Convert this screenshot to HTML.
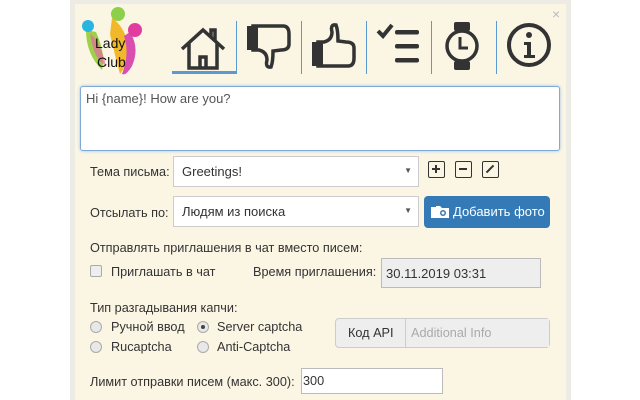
<!DOCTYPE html>
<html><head><meta charset="utf-8"><style>
*{box-sizing:border-box;margin:0;padding:0}
body{width:640px;height:400px;background:#fff;font-family:"Liberation Sans",sans-serif;font-size:12.7px;color:#333;position:relative;overflow:hidden}
.panel{position:absolute;left:70px;top:0;width:501px;height:400px;background:#ecebe4}
.inner{position:absolute;left:75px;top:4px;width:491px;height:396px;background:#fbf6e4}
.a{position:absolute}
.sep{position:absolute;top:21px;width:1px;height:53px;background:#5a9ad0}
.sel{position:absolute;background:#fff;border:1px solid #ccc;padding:7px 8px;font-size:13px}
.sel:after{content:"▼";position:absolute;right:6px;top:9px;font-size:8px;color:#555}
.sq{position:absolute;top:161px;width:17px;height:17px;border:1.5px solid #333;border-radius:2px}
.rad{position:absolute;width:12px;height:12px;border-radius:50%;border:1px solid #aaa;background:#e8e8e8}
</style></head><body>
<div class="panel"></div><div class="inner"></div>
<div class="a" style="left:552px;top:6px;color:#bbb;font-size:14px">×</div>
<svg class="a" style="left:80px;top:4px" width="75" height="72" viewBox="0 0 75 72">
<path d="M6 26 Q6 50 22 66 Q26 50 16 28Z" fill="#9ed04a"/><path d="M32 14 Q44 22 48 40 Q50 58 40 70 Q34 48 30 30Z" fill="#f1b82c"/><path d="M50 28 Q60 44 52 62 Q46 72 42 70 Q50 50 44 32Z" fill="#d94fb0"/><path d="M10 30 Q20 36 26 62 Q14 56 10 30Z" fill="#e46aa0" opacity=".7"/>
<circle cx="8" cy="22" r="6" fill="#28b6e0"/><circle cx="38" cy="10" r="7" fill="#8ccf4a"/><circle cx="55" cy="26" r="7" fill="#e33ca0"/>
<text x="15" y="44" font-family="Liberation Sans" font-size="14" fill="#111">Lady</text><text x="17" y="63" font-family="Liberation Sans" font-size="14" fill="#111">Club</text>
</svg>
<svg class="a" style="left:178px;top:27px" width="50" height="44" viewBox="0 0 50 44"><path d="M4 22 L25 3 L46 22 M11 16 V41 H39 V16 M22 41 V30 H28 V41 M33 10 V3 H37 V14" fill="none" stroke="#333" stroke-width="3.5"/></svg>
<div class="a" style="left:172px;top:71px;width:65px;height:3px;background:#5a9ad0"></div>
<div class="sep" style="left:236px"></div><div class="sep" style="left:301px"></div><div class="sep" style="left:366px"></div><div class="sep" style="left:431px"></div><div class="sep" style="left:496px"></div>
<svg class="a" style="left:245px;top:22px" width="48" height="48" viewBox="0 0 48 48"><path d="M8 4 H38 Q44 4 44 12 V22 Q44 28 36 28 L28 29 Q28 40 26 45 Q20 46 22 38 Q22 30 14 28 H8Z" fill="none" stroke="#333" stroke-width="3.5"/><path d="M2 4 H13 V28 H2Z" fill="#333"/></svg>
<svg class="a" style="left:310px;top:22px" width="48" height="48" viewBox="0 0 48 48"><path d="M8 44 H38 Q44 44 44 36 V26 Q44 20 36 20 L28 19 Q28 8 26 3 Q20 2 22 10 Q22 18 14 20 H8Z" fill="none" stroke="#333" stroke-width="3.5"/><path d="M2 20 H13 V44 H2Z" fill="#333"/></svg>
<svg class="a" style="left:376px;top:22px" width="46" height="46" viewBox="0 0 46 46"><path d="M2 9 L7 14 L16 3" fill="none" stroke="#333" stroke-width="4"/><rect x="19" y="8" width="24" height="4.5" rx="2" fill="#333"/><rect x="19" y="22" width="24" height="4.5" rx="2" fill="#333"/><rect x="19" y="36" width="24" height="4.5" rx="2" fill="#333"/></svg>
<svg class="a" style="left:442px;top:21px" width="40" height="50" viewBox="0 0 40 50"><rect x="12" y="1" width="16" height="9" rx="2" fill="#333"/><rect x="12" y="40" width="16" height="9" rx="2" fill="#333"/><circle cx="20" cy="25" r="15" fill="#fbf6e4" stroke="#333" stroke-width="3.5"/><path d="M18 16 V27 H26" fill="none" stroke="#333" stroke-width="3"/></svg>
<svg class="a" style="left:506px;top:22px" width="46" height="46" viewBox="0 0 46 46"><circle cx="23" cy="23" r="20" fill="none" stroke="#333" stroke-width="4"/><circle cx="23" cy="13" r="3" fill="#333"/><path d="M18 20 H25 V33 H29 V36 H18 V33 H21 V23 H18Z" fill="#333"/></svg>
<div class="a" style="left:80px;top:86px;width:480px;height:65px;background:#fff;border:1px solid #7ea9da;border-radius:3px;box-shadow:0 0 3px #9bc0e8;padding:4px 5px;font-size:13px;color:#555">Hi {name}! How are you?</div>
<div class="a" style="left:90px;top:165px">Тема письма:</div>
<div class="sel" style="left:173px;top:156px;width:246px;height:31px">Greetings!</div>
<div class="sq" style="left:428px"><div class="a" style="left:3px;top:6px;width:8px;height:2px;background:#333"></div><div class="a" style="left:6px;top:3px;width:2px;height:8px;background:#333"></div></div>
<div class="sq" style="left:455px"><div class="a" style="left:3px;top:6px;width:8px;height:2px;background:#333"></div></div>
<div class="sq" style="left:482px"><div class="a" style="left:2px;top:6px;width:10px;height:2px;background:#333;transform:rotate(-45deg)"></div></div>
<div class="a" style="left:90px;top:206px">Отсылать по:</div>
<div class="sel" style="left:173px;top:196px;width:246px;height:31px">Людям из поиска</div>
<div class="a" style="left:424px;top:196px;width:126px;height:32px;background:#337ab7;border-radius:4px;color:#fff;font-size:13px;padding:8px 0 0 29px">Добавить фото</div>
<svg class="a" style="left:430px;top:205px" width="20" height="14"><path d="M1 2 H6 V1 H10 L12 3 H19 V13 H1Z" fill="#fff"/><circle cx="13" cy="8" r="3" fill="#337ab7"/><circle cx="13" cy="8" r="1.5" fill="#fff"/></svg>
<div class="a" style="left:90px;top:241px">Отправлять приглашения в чат вместо писем:</div>
<div class="a" style="left:90px;top:265px;width:12px;height:12px;border:1px solid #aaa;border-radius:2px;background:#eee"></div>
<div class="a" style="left:111px;top:265px">Приглашать в чат</div>
<div class="a" style="left:253px;top:265px">Время приглашения:</div>
<div class="a" style="left:381px;top:258px;width:160px;height:30px;background:#eee;border:1px solid #bbb;padding:7px 4px;font-size:13px">30.11.2019 03:31</div>
<div class="a" style="left:90px;top:301px">Тип разгадывания капчи:</div>
<div class="rad" style="left:90px;top:321px"></div><div class="a" style="left:111px;top:320px">Ручной ввод</div>
<div class="rad" style="left:197px;top:321px"><div class="a" style="left:3px;top:3px;width:4px;height:4px;border-radius:50%;background:#444"></div></div><div class="a" style="left:217px;top:320px">Server captcha</div>
<div class="rad" style="left:90px;top:341px"></div><div class="a" style="left:111px;top:340px">Rucaptcha</div>
<div class="rad" style="left:197px;top:341px"></div><div class="a" style="left:217px;top:340px">Anti-Captcha</div>
<div class="a" style="left:335px;top:318px;width:215px;height:30px;border:1px solid #ccc;border-radius:4px;background:#eee"></div>
<div class="a" style="left:405px;top:319px;width:144px;height:28px;background:#eee;border-left:1px solid #ccc;color:#aaa;padding:7px 5px">Additional Info</div>
<div class="a" style="left:348px;top:326px">Код API</div>
<div class="a" style="left:90px;top:375px">Лимит отправки писем (макс. 300):</div>
<div class="a" style="left:301px;top:368px;width:142px;height:26px;background:#fff;border:1px solid #bbb;padding:5px 1px">300</div>
</body></html>
